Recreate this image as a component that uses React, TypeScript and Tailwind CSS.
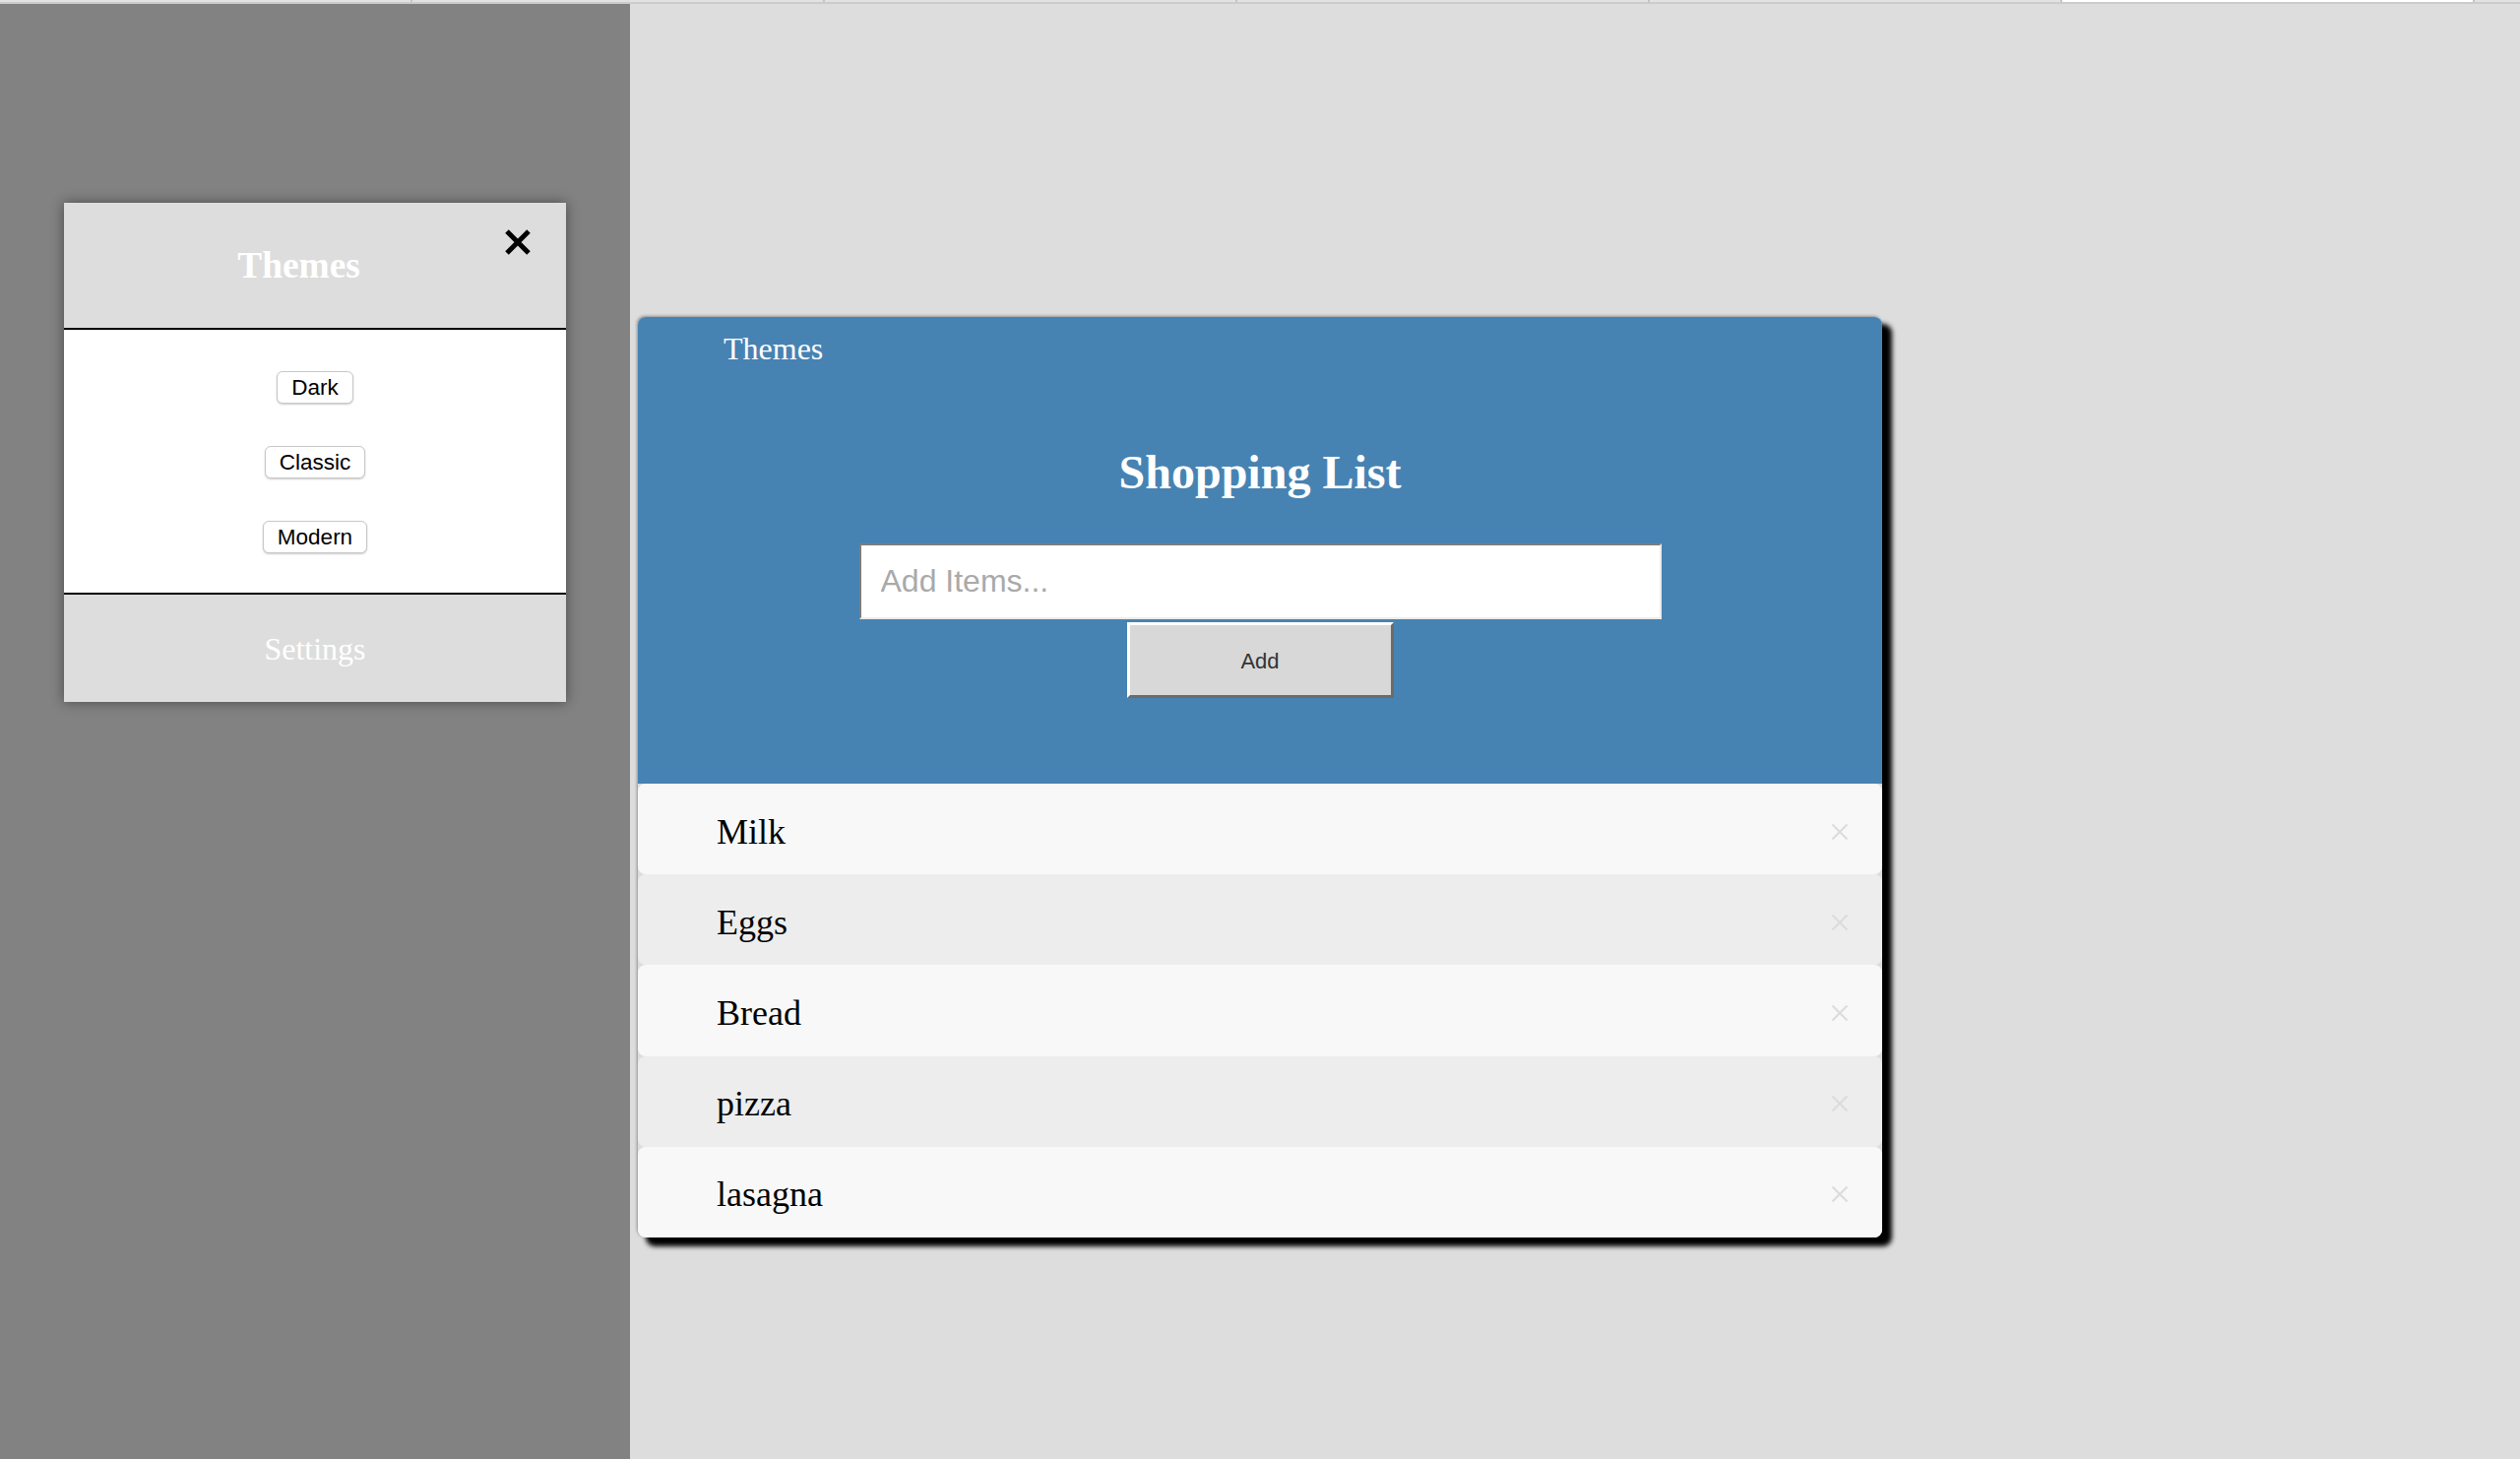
import React from "react";

const serif = { fontFamily: '"Liberation Serif", "Times New Roman", serif' };
const sans = { fontFamily: '"Liberation Sans", Arial, sans-serif' };

function CloseIcon() {
  return (
    <svg width="28" height="28" viewBox="0 0 28 28">
      <path d="M3 3 L25 25 M25 3 L3 25" stroke="#000" strokeWidth="5" strokeLinecap="butt" fill="none" />
    </svg>
  );
}

function SmallX() {
  return (
    <svg width="18" height="18" viewBox="0 0 18 18">
      <path d="M1.5 1.5 L16.5 16.5 M16.5 1.5 L1.5 16.5" stroke="#dcdcdc" strokeWidth="2.2" fill="none" />
    </svg>
  );
}

const items = ["Milk", "Eggs", "Bread", "pizza", "lasagna"];

export default function App() {
  return (
    <div className="flex h-[1482px] w-[2560px] flex-col overflow-hidden bg-[#dddddd]">
      {/* top strip */}
      <div className="flex h-[2px] bg-[#e2e2e2]">
        {[0, 1, 2, 3, 4].map((i) => (
          <div key={i} className="h-full w-[419px] border-r-2 border-[#c4c4c4]" />
        ))}
        <div className="h-full w-[419px] border-r-2 border-[#c4c4c4] bg-white" />
        <div className="h-full flex-1" />
      </div>
      <div className="h-[2px] bg-[#cbcbcb]" />

      <div className="flex flex-1">
        {/* left side panel */}
        <div className="w-[640px] shrink-0 bg-[#828282] pl-[65px] pt-[202px]">
          <div className="flex w-[510px] flex-col shadow-[0_0_12px_rgba(0,0,0,0.45)]">
            <div className="relative flex h-[127px] items-center justify-center bg-[#dddddd] pr-[33px]">
              <span className="text-[37.4px] font-bold leading-none text-white" style={serif}>
                Themes
              </span>
              <div className="absolute right-[35px] top-[26px]">
                <CloseIcon />
              </div>
            </div>
            <div className="flex h-[271px] flex-col items-center gap-[43px] border-y-2 border-black bg-white pt-[42px]">
              {["Dark", "Classic", "Modern"].map((t) => (
                <button
                  key={t}
                  className="h-[33px] rounded-[6px] border border-[#c8c8c8] bg-white px-[14px] text-[22.5px] leading-[31px] text-black shadow-[0_1px_2px_rgba(0,0,0,0.2)]"
                  style={sans}
                >
                  {t}
                </button>
              ))}
            </div>
            <div className="flex h-[109px] items-center justify-center bg-[#dddddd]">
              <span className="text-[32px] leading-none text-white" style={serif}>
                Settings
              </span>
            </div>
          </div>
        </div>

        {/* main area */}
        <div className="flex-1 pl-[8px] pt-[318px]">
          <div className="w-[1264px] rounded-[8px] shadow-[9px_8px_5px_1px_#000,-1px_-1px_3px_rgba(0,0,0,0.35)]">
            <div className="flex h-[474px] flex-col rounded-t-[8px] bg-[#4783b2]">
              <div className="mt-[14px] h-[36px] pl-[87px] text-[32px] leading-[36px] text-white" style={serif}>
                Themes
              </div>
              <h1
                className="mt-[80px] h-[56px] text-center text-[48px] font-bold leading-[56px] text-white"
                style={serif}
              >
                Shopping List
              </h1>
              <div className="mt-[44px] flex flex-col items-center gap-[3px]">
                <input
                  placeholder="Add Items..."
                  className="h-[77px] w-[815px] border-2 border-b-[#ececec] border-l-[#7d7d7d] border-r-[#ececec] border-t-[#7d7d7d] bg-white px-[20px] text-[32px] text-black outline-none placeholder:text-[#a9a9a9]"
                  style={sans}
                />
                <button
                  className="h-[77px] w-[271px] border-[3px] border-b-[#6b6b6b] border-l-white border-r-[#6b6b6b] border-t-white bg-[#d8d8d8] pt-[2px] text-[22px] text-[#333]"
                  style={sans}
                >
                  Add
                </button>
              </div>
            </div>
            {items.map((it, i) => (
              <div
                key={it}
                className={`flex h-[92.2px] items-center justify-between rounded-[8px] pl-[80px] pr-[34px] pt-[5px] ${
                  i % 2 === 0 ? "bg-[#f8f8f8]" : "bg-[#ededed]"
                }`}
              >
                <span className="text-[36px] leading-none text-black" style={serif}>
                  {it}
                </span>
                <SmallX />
              </div>
            ))}
          </div>
        </div>
      </div>
    </div>
  );
}
